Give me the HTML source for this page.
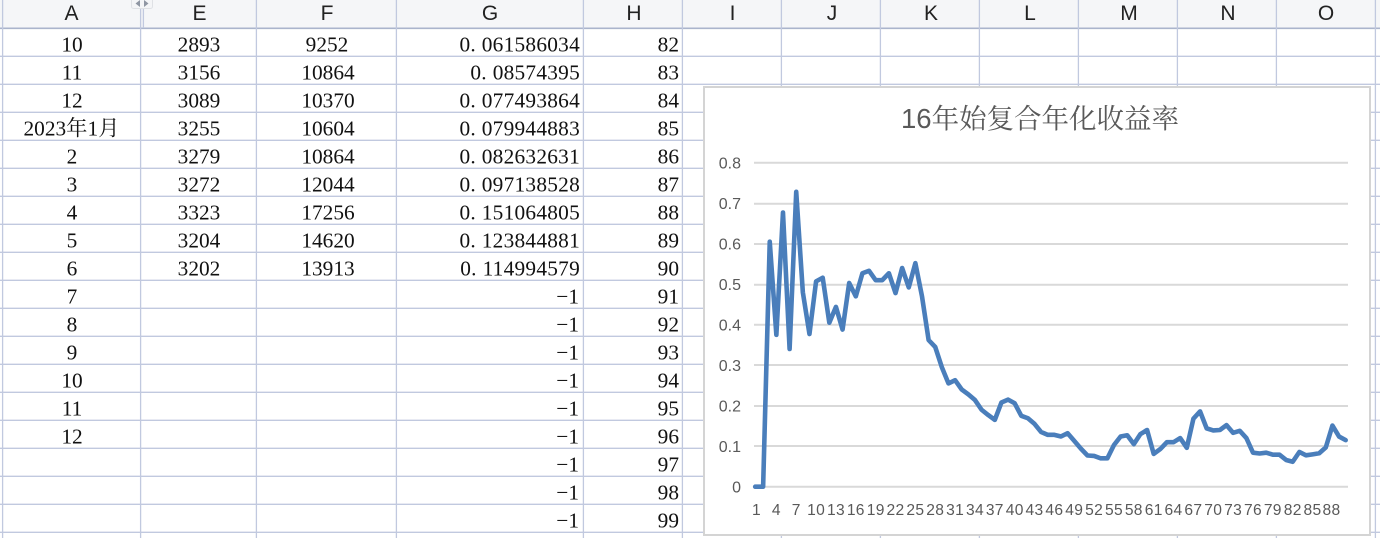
<!DOCTYPE html>
<html lang="zh">
<head>
<meta charset="utf-8">
<title>16年始复合年化收益率</title>
<style>
html,body{margin:0;padding:0;width:1380px;height:538px;overflow:hidden;background:#fff}
svg{display:block}
.h{font:21px "Liberation Sans","Noto Sans CJK SC",sans-serif;fill:#222;text-anchor:middle}
.c{font:21.33px "Liberation Serif","Noto Serif CJK SC",serif;fill:#111;text-anchor:middle}
.r{font:21.33px "Liberation Serif","Noto Serif CJK SC",serif;fill:#111;text-anchor:end}
.d{letter-spacing:.25px}
.y{font:16px "Liberation Sans",sans-serif;fill:#595959;text-anchor:end}
.x{font:15.6px "Liberation Sans",sans-serif;fill:#595959;text-anchor:middle;letter-spacing:.3px}
.t{font:27.5px "Liberation Sans","Noto Serif CJK SC",serif;fill:#595959}
.g line{stroke:#c1c9df;stroke-width:1.3}
.a line{stroke:#d9d9d9;stroke-width:2}
</style>
</head>
<body>
<svg width="1380" height="538" viewBox="0 0 1380 538" xmlns="http://www.w3.org/2000/svg">
<rect x="0" y="0" width="1380" height="28" fill="#f5f6f8"/>
<g class="g">
<line x1="0" x2="1380" y1="28.3" y2="28.3" style="stroke:#aab4cc;stroke-width:1.6"/>
<line x1="0" x2="1380" y1="56.3" y2="56.3"/>
<line x1="0" x2="1380" y1="84.3" y2="84.3"/>
<line x1="0" x2="1380" y1="112.3" y2="112.3"/>
<line x1="0" x2="1380" y1="140.3" y2="140.3"/>
<line x1="0" x2="1380" y1="168.3" y2="168.3"/>
<line x1="0" x2="1380" y1="196.3" y2="196.3"/>
<line x1="0" x2="1380" y1="224.3" y2="224.3"/>
<line x1="0" x2="1380" y1="252.3" y2="252.3"/>
<line x1="0" x2="1380" y1="280.3" y2="280.3"/>
<line x1="0" x2="1380" y1="308.3" y2="308.3"/>
<line x1="0" x2="1380" y1="336.3" y2="336.3"/>
<line x1="0" x2="1380" y1="364.3" y2="364.3"/>
<line x1="0" x2="1380" y1="392.3" y2="392.3"/>
<line x1="0" x2="1380" y1="420.3" y2="420.3"/>
<line x1="0" x2="1380" y1="448.3" y2="448.3"/>
<line x1="0" x2="1380" y1="476.3" y2="476.3"/>
<line x1="0" x2="1380" y1="504.3" y2="504.3"/>
<line x1="0" x2="1380" y1="532.3" y2="532.3"/>
<line x1="2.6" x2="2.6" y1="0" y2="538"/>
<line x1="140.6" x2="140.6" y1="0" y2="538"/>
<line x1="143.4" x2="143.4" y1="8" y2="28"/>
<line x1="256.4" x2="256.4" y1="0" y2="538"/>
<line x1="396.4" x2="396.4" y1="0" y2="538"/>
<line x1="583.4" x2="583.4" y1="0" y2="538"/>
<line x1="682.4" x2="682.4" y1="0" y2="538"/>
<line x1="781.4" x2="781.4" y1="0" y2="538"/>
<line x1="880.4" x2="880.4" y1="0" y2="538"/>
<line x1="979.4" x2="979.4" y1="0" y2="538"/>
<line x1="1078.4" x2="1078.4" y1="0" y2="538"/>
<line x1="1177.4" x2="1177.4" y1="0" y2="538"/>
<line x1="1276.4" x2="1276.4" y1="0" y2="538"/>
<line x1="1375.4" x2="1375.4" y1="0" y2="538"/>
</g>
<!-- hidden-column splitter -->
<rect x="131.5" y="-3" width="21" height="11.5" rx="2" fill="#f4f5f7" stroke="#dfe1e5"/>
<path d="M140 0V7L135.500 3.500Z M144 0V7L148.500 3.500Z" fill="#8f96a3"/>
<!-- headers -->
<text class="h" x="71.500" y="20">A</text>
<text class="h" x="199.500" y="20">E</text>
<text class="h" x="327" y="20">F</text>
<text class="h" x="490" y="20">G</text>
<text class="h" x="634" y="20">H</text>
<text class="h" x="732.500" y="20">I</text>
<text class="h" x="832" y="20">J</text>
<text class="h" x="931" y="20">K</text>
<text class="h" x="1030" y="20">L</text>
<text class="h" x="1129" y="20">M</text>
<text class="h" x="1228" y="20">N</text>
<text class="h" x="1326" y="20">O</text>
<!-- column A -->
<text class="c" x="72" y="51.500">10</text>
<text class="c" x="72" y="79.500">11</text>
<text class="c" x="72" y="107.500">12</text>
<text class="c" x="71.500" y="135.500">2023年1月</text>
<text class="c" x="72" y="163.500">2</text>
<text class="c" x="72" y="191.500">3</text>
<text class="c" x="72" y="219.500">4</text>
<text class="c" x="72" y="247.500">5</text>
<text class="c" x="72" y="275.500">6</text>
<text class="c" x="72" y="303.500">7</text>
<text class="c" x="72" y="331.500">8</text>
<text class="c" x="72" y="359.500">9</text>
<text class="c" x="72" y="387.500">10</text>
<text class="c" x="72" y="415.500">11</text>
<text class="c" x="72" y="443.500">12</text>
<!-- column E -->
<text class="c" x="199" y="51.500">2893</text>
<text class="c" x="199" y="79.500">3156</text>
<text class="c" x="199" y="107.500">3089</text>
<text class="c" x="199" y="135.500">3255</text>
<text class="c" x="199" y="163.500">3279</text>
<text class="c" x="199" y="191.500">3272</text>
<text class="c" x="199" y="219.500">3323</text>
<text class="c" x="199" y="247.500">3204</text>
<text class="c" x="199" y="275.500">3202</text>
<!-- column F -->
<text class="c" x="327" y="51.500">9252</text>
<text class="c" x="328" y="79.500">10864</text>
<text class="c" x="328" y="107.500">10370</text>
<text class="c" x="328" y="135.500">10604</text>
<text class="c" x="328" y="163.500">10864</text>
<text class="c" x="328" y="191.500">12044</text>
<text class="c" x="328" y="219.500">17256</text>
<text class="c" x="328" y="247.500">14620</text>
<text class="c" x="328" y="275.500">13913</text>
<!-- column G -->
<text class="r d" x="580" y="51.500">0.<tspan dx="5.800">061586034</tspan></text>
<text class="r d" x="580" y="79.500">0.<tspan dx="5.800">08574395</tspan></text>
<text class="r d" x="580" y="107.500">0.<tspan dx="5.800">077493864</tspan></text>
<text class="r d" x="580" y="135.500">0.<tspan dx="5.800">079944883</tspan></text>
<text class="r d" x="580" y="163.500">0.<tspan dx="5.800">082632631</tspan></text>
<text class="r d" x="580" y="191.500">0.<tspan dx="5.800">097138528</tspan></text>
<text class="r d" x="580" y="219.500">0.<tspan dx="5.800">151064805</tspan></text>
<text class="r d" x="580" y="247.500">0.<tspan dx="5.800">123844881</tspan></text>
<text class="r d" x="580" y="275.500">0.<tspan dx="5.800">114994579</tspan></text>
<text class="r" x="579" y="303.500">−1</text>
<text class="r" x="579" y="331.500">−1</text>
<text class="r" x="579" y="359.500">−1</text>
<text class="r" x="579" y="387.500">−1</text>
<text class="r" x="579" y="415.500">−1</text>
<text class="r" x="579" y="443.500">−1</text>
<text class="r" x="579" y="471.500">−1</text>
<text class="r" x="579" y="499.500">−1</text>
<text class="r" x="579" y="527.500">−1</text>
<!-- column H -->
<text class="r" x="679" y="51.500">82</text>
<text class="r" x="679" y="79.500">83</text>
<text class="r" x="679" y="107.500">84</text>
<text class="r" x="679" y="135.500">85</text>
<text class="r" x="679" y="163.500">86</text>
<text class="r" x="679" y="191.500">87</text>
<text class="r" x="679" y="219.500">88</text>
<text class="r" x="679" y="247.500">89</text>
<text class="r" x="679" y="275.500">90</text>
<text class="r" x="679" y="303.500">91</text>
<text class="r" x="679" y="331.500">92</text>
<text class="r" x="679" y="359.500">93</text>
<text class="r" x="679" y="387.500">94</text>
<text class="r" x="679" y="415.500">95</text>
<text class="r" x="679" y="443.500">96</text>
<text class="r" x="679" y="471.500">97</text>
<text class="r" x="679" y="499.500">98</text>
<text class="r" x="679" y="527.500">99</text>
<!-- chart -->
<rect x="704" y="87" width="666" height="448" fill="#fff" stroke="#d4d4d4" stroke-width="2"/>
<text class="t" x="901" y="128" textLength="278">16年始复合年化收益率</text>
<g class="a">
<line x1="754" x2="1348" y1="162.700" y2="162.700"/>
<line x1="754" x2="1348" y1="203.700" y2="203.700"/>
<line x1="754" x2="1348" y1="244" y2="244"/>
<line x1="754" x2="1348" y1="284.700" y2="284.700"/>
<line x1="754" x2="1348" y1="324.700" y2="324.700"/>
<line x1="754" x2="1348" y1="365" y2="365"/>
<line x1="754" x2="1348" y1="406" y2="406"/>
<line x1="754" x2="1348" y1="446" y2="446"/>
<line x1="754" x2="1348" y1="486.700" y2="486.700"/>
</g>
<text class="y" x="741" y="168.500">0.8</text>
<text class="y" x="741" y="209">0.7</text>
<text class="y" x="741" y="249.500">0.6</text>
<text class="y" x="741" y="290">0.5</text>
<text class="y" x="741" y="330.500">0.4</text>
<text class="y" x="741" y="371">0.3</text>
<text class="y" x="741" y="411.500">0.2</text>
<text class="y" x="741" y="452">0.1</text>
<text class="y" x="741" y="492.500">0</text>
<g transform="translate(756.500 486.700) scale(6.62 -405)">
<polyline fill="none" stroke="#4a7ebb" stroke-width="4.6" stroke-linejoin="round" stroke-linecap="round" vector-effect="non-scaling-stroke" points="-0.2,0 1,0 2,.605 3,.375 4,.677 5,.34 6,.728 7,.48 8,.377 9,.507 10,.516 11,.405 12,.444 13,.388 14,.503 15,.47 16,.527 17,.533 18,.51 19,.51 20,.527 21,.478 22,.54 23,.492 24,.552 25,.47 26,.362 27,.345 28,.295 29,.255 30,.263 31,.24 32,.228 33,.214 34,.19 35,.177 36,.165 37,.208 38,.215 39,.206 40,.175 41,.169 42,.155 43,.135 44,.128 45,.128 46,.124 47,.132 48,.113 49,.094 50,.077 51,.076 52,.07 53,.07 54,.103 55,.124 56,.127 57,.105 58,.13 59,.14 60,.081 61,.093 62,.11 63,.11 64,.12 65,.096 66,.168 67,.186 68,.144 69,.139 70,.14 71,.152 72,.133 73,.138 74,.12 75,.084 76,.082 77,.084 78,.079 79,.079 80,.066 81,.0616 82,.0857 83,.0775 84,.0799 85,.0826 86,.0971 87,.151 88,.1238 89,.115"/>
</g>
<text class="x" x="756.500" y="515">1</text>
<text class="x" x="776.400" y="515">4</text>
<text class="x" x="796.200" y="515">7</text>
<text class="x" x="816.100" y="515">10</text>
<text class="x" x="836" y="515">13</text>
<text class="x" x="855.800" y="515">16</text>
<text class="x" x="875.700" y="515">19</text>
<text class="x" x="895.500" y="515">22</text>
<text class="x" x="915.400" y="515">25</text>
<text class="x" x="935.200" y="515">28</text>
<text class="x" x="955.100" y="515">31</text>
<text class="x" x="975" y="515">34</text>
<text class="x" x="994.800" y="515">37</text>
<text class="x" x="1014.700" y="515">40</text>
<text class="x" x="1034.500" y="515">43</text>
<text class="x" x="1054.400" y="515">46</text>
<text class="x" x="1074.200" y="515">49</text>
<text class="x" x="1094.100" y="515">52</text>
<text class="x" x="1114" y="515">55</text>
<text class="x" x="1133.800" y="515">58</text>
<text class="x" x="1153.700" y="515">61</text>
<text class="x" x="1173.500" y="515">64</text>
<text class="x" x="1193.400" y="515">67</text>
<text class="x" x="1213.200" y="515">70</text>
<text class="x" x="1233.100" y="515">73</text>
<text class="x" x="1253" y="515">76</text>
<text class="x" x="1272.800" y="515">79</text>
<text class="x" x="1292.700" y="515">82</text>
<text class="x" x="1312.500" y="515">85</text>
<text class="x" x="1331.500" y="515">88</text>
</svg>
</body>
</html>
